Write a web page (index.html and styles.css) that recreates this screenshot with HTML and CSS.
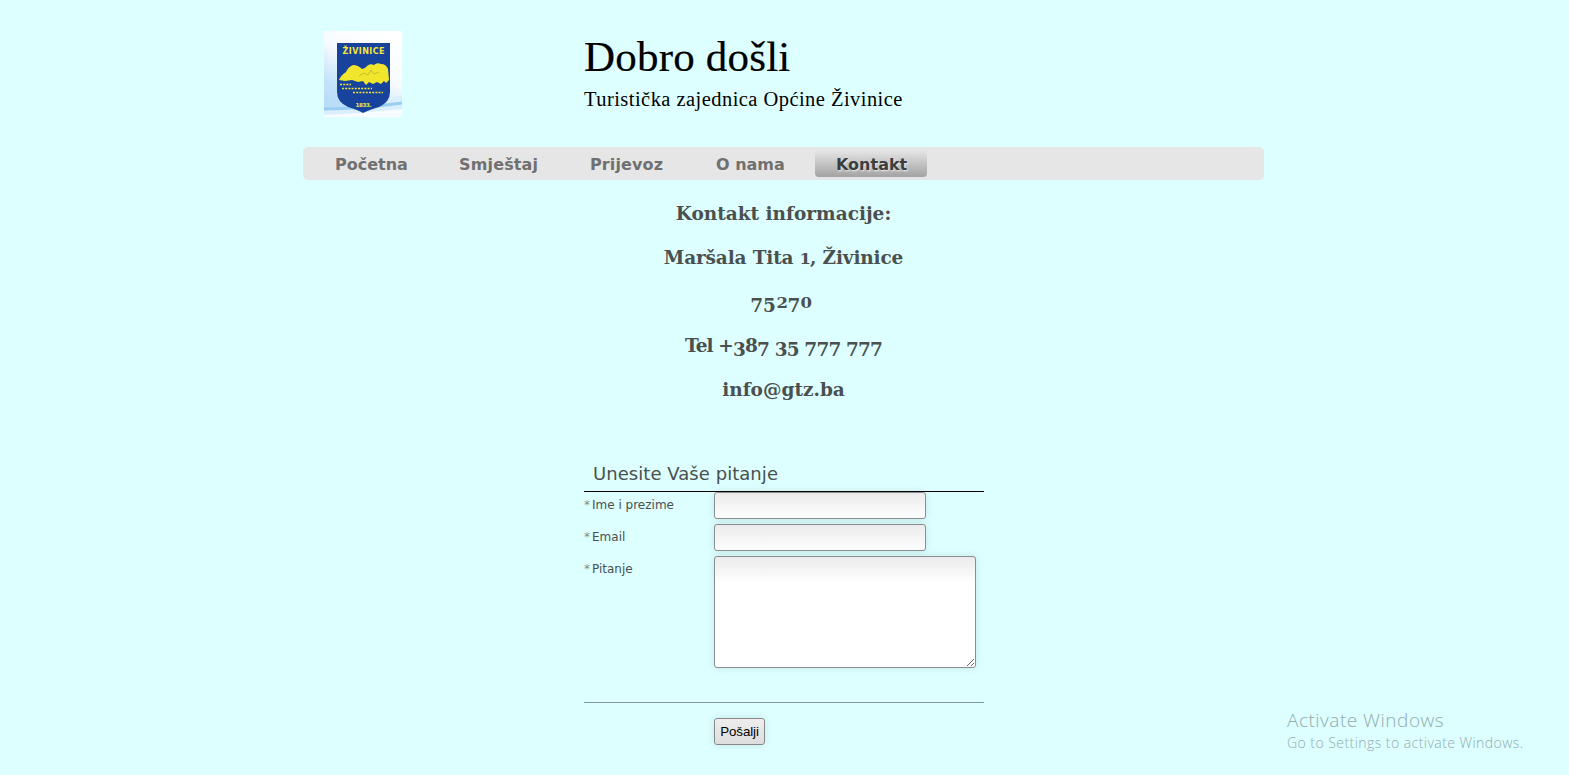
FILE: index.html
```html
<!DOCTYPE html>
<html lang="bs">
<head>
<meta charset="utf-8">
<title>Kontakt</title>
<link rel="stylesheet" href="styles.css">
</head>
<body>
<div class="page">
  <header class="header">
    <svg class="logo" width="78" height="86" viewBox="0 0 78 86">
      <defs>
        <linearGradient id="sky" x1="0.75" y1="0" x2="0.2" y2="1">
          <stop offset="0" stop-color="#fff"/><stop offset=".4" stop-color="#f7fbfe"/><stop offset=".75" stop-color="#c3e2fa"/><stop offset="1" stop-color="#b5dcf8"/>
        </linearGradient>
      </defs>
      <rect width="78" height="86" fill="url(#sky)"/>
      <path d="M0 77Q35 77 78 64V86H0Z" fill="#d9effd"/>
      <path d="M0 78Q35 78 78 72" fill="none" stroke="#9bcdf3" stroke-width="3"/>
      <path d="M0 84Q40 82 78 78V86H0Z" fill="#f6fcff"/>
      <path d="M13 12H66V61Q66 71 55 76Q45 79 39 82Q34 79 24 76Q13 71 13 61Z" fill="#17439d"/>
      <text x="39.500" y="22.500" text-anchor="middle" textLength="42" class="logo-name">ŽIVINICE</text>
      <path d="M15 49Q17 44 22 41Q24 36 29 34Q34 34 38 38L41 37L43 35Q46 32 50 34Q53 31 57 33Q62 33 64 38L65 49L62 52L60 50L57 53L53 51L49 53L45 51L42 54L39 50L34 51L28 49L21 50Z" fill="#f2e62d"/>
      <path d="M35 45l5-3 4 2 3-5 3 4 5-2" fill="none" stroke="#c2bd2d" stroke-width="1"/>
      <g stroke="#eee43b" stroke-width="1.300" stroke-dasharray="2 1.200"><path d="M16 53.500H27"/><path d="M18 57.500H48"/><path d="M29 61.500H59"/></g>
      <text x="39.500" y="76" text-anchor="middle" textLength="16" class="logo-year">1833.</text>
    </svg>
    <div class="titles">
      <h1 class="title">Dobro došli</h1>
      <p class="subtitle">Turistička zajednica Općine Živinice</p>
    </div>
  </header>
  <nav class="nav">
    <a class="tab">Početna</a><a class="tab tab-b">Smještaj</a><a class="tab tab-c">Prijevoz</a><a class="tab tab-d">O nama</a><a class="tab active">Kontakt</a>
  </nav>
  <main>
    <section class="contact">
      <p class="line l1">Kontakt informacije:</p>
      <p class="line l2">Maršala Tita <span class="low">1</span>, Živinice</p>
      <p class="line l3"><span class="drop">75</span><span class="low">2</span><span class="drop">7</span><span class="low">0</span></p>
      <p class="line l4">Tel +<span class="drop">3</span>8<span class="drop">7</span> <span class="drop">35</span> <span class="drop">777</span> <span class="drop">777</span></p>
      <p class="line l5">info@gtz.ba</p>
    </section>
    <form class="form">
      <h2 class="legend">Unesite Vaše pitanje</h2>
      <div class="row"><label class="label"><span class="star">*</span>Ime i prezime</label><input class="field" type="text"></div>
      <div class="row"><label class="label"><span class="star">*</span>Email</label><input class="field" type="text"></div>
      <div class="row"><label class="label"><span class="star">*</span>Pitanje</label><textarea class="field area"></textarea></div>
      <div class="actions"><button class="send" type="button">Pošalji</button></div>
    </form>
  </main>
</div>
<aside class="watermark"><div class="wm-title">Activate Windows</div><div class="wm-text">Go to Settings to activate Windows.</div></aside>
</body>
</html>
```
FILE: styles.css
```css
* { box-sizing: border-box; }
body { margin: 0; height: 775px; overflow: hidden; background: #dff; color: #4a4f4f; font-family: "DejaVu Sans", sans-serif; }
h1, h2, p { margin: 0; font-weight: normal; }
.page { width: 961px; margin-left: 303px; }
.header { display: flex; height: 147px; padding: 31px 0 0 21px; }
.logo { flex: none; }
.logo-name { font: bold 8px "DejaVu Sans", sans-serif; fill: #f2e838; }
.logo-year { font: bold 5.5px "DejaVu Sans", sans-serif; fill: #f2e838; }
.titles { margin-left: 182px; padding-top: 1px; color: #000; font-family: "Liberation Serif", serif; white-space: nowrap; }
.title { font-size: 43px; line-height: 50px; letter-spacing: .2px; -webkit-text-stroke: .2px #000; }
.subtitle { font-size: 20.5px; line-height: 24px; margin-top: 5px; letter-spacing: .45px; }
.nav { display: flex; align-items: center; height: 33px; padding-left: 11px; border-radius: 5px; background: #e6e6e6; }
.tab { width: 124px; height: 26px; padding-left: 21px; line-height: 27px; font-size: 16px; font-weight: bold; color: #707070; white-space: nowrap; }
.tab-b { width: 131px; letter-spacing: .15px; }
.tab-c { width: 125px; letter-spacing: .12px; }
.tab-d { width: 121px; padding-left: 22px; }
.active { width: 112px; border-radius: 4px; color: #3d3d3d; background: linear-gradient(#e4e4e4, #a2a2a2); text-shadow: 1px 1px 2px #eee; }
.contact { height: 276px; padding-top: 12px; font-family: "DejaVu Serif", serif; font-size: 18.5px; text-align: center; }
.line { height: 44px; line-height: 44px; font-weight: bold; white-space: nowrap; }
.l2 { letter-spacing: -.15px; }
.l3 { padding-right: 5px; }
.l4 { letter-spacing: -.85px; }
.low { display: inline-block; font-size: 15px; line-height: 1; transform: scaleX(1.1); }
.l3 .low { margin: 0 .5px; }
.drop { position: relative; top: 4px; }
.form { width: 400px; margin-left: 281px; }
.legend { height: 36px; padding-left: 9px; border-bottom: 1px solid #000; font-size: 18px; line-height: 36px; letter-spacing: .05px; }
.row { display: flex; margin-bottom: 5px; }
.label { width: 130px; padding-top: 5px; font-size: 12px; line-height: 16px; white-space: nowrap; }
.star { display: inline-block; width: 8px; color: #798f8f; }
.field { display: block; width: 212px; height: 27px; margin: 0; border: 1px solid #888f92; border-radius: 3px; background: linear-gradient(#ebebeb, #fff 26px) #fff; box-shadow: 0 0 8px rgba(0, 0, 0, .1); }
.area { width: 262px; height: 112px; resize: both; }
.actions { height: 73px; margin-top: 34px; padding: 15px 0 0 130px; border-top: 1px solid #81979b; }
.send { display: block; width: 51px; height: 27px; padding: 0; border: 1px solid #888; border-radius: 3px; background: linear-gradient(#eee, #ddd); box-shadow: 0 0 8px rgba(0, 0, 0, .1); color: #000; font: 13.333px "Liberation Sans", sans-serif; letter-spacing: -.1px; }
.watermark { position: absolute; left: 1287px; top: 707px; color: #93abae; font-family: "Open Sans", sans-serif; font-weight: 300; white-space: nowrap; }
.wm-title { font-size: 19px; line-height: 26px; letter-spacing: .5px; }
.wm-text { font-size: 14px; line-height: 20px; letter-spacing: .45px; }
```
